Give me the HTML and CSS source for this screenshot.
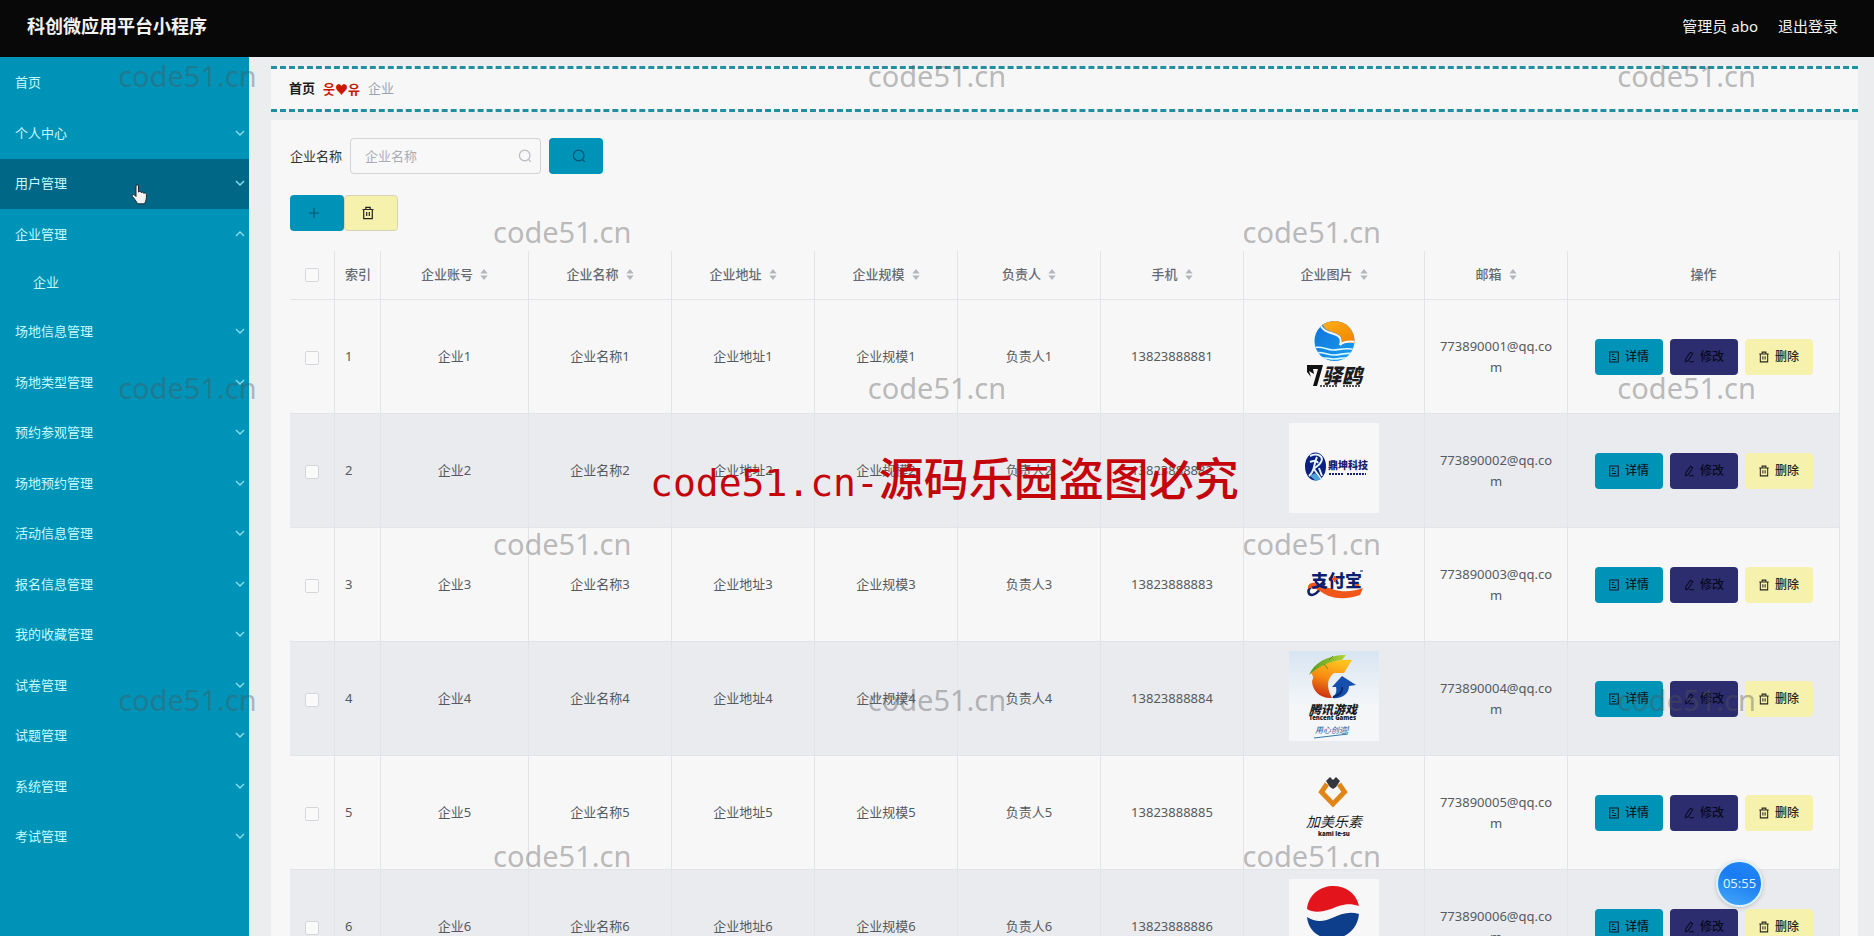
FILE: index.html
```html
<!DOCTYPE html>
<html lang="zh-CN">
<head>
<meta charset="utf-8">
<title>科创微应用平台小程序</title>
<link rel="stylesheet" href="styles.css">
</head>
<body>
<svg class="sprite" aria-hidden="true">
  <symbol id="i-down" viewBox="0 0 10 6"><path d="M1 1l4 4 4-4"/></symbol>
  <symbol id="i-up" viewBox="0 0 10 6"><path d="M1 5l4-4 4 4"/></symbol>
  <symbol id="i-search" viewBox="0 0 14 14"><circle cx="6.7" cy="6.5" r="5.3"/><path d="M10.5 10.5l2.3 2.3"/></symbol>
  <symbol id="i-plus" viewBox="0 0 14 14"><path d="M7 2v10M2 7h10"/></symbol>
  <symbol id="i-trash" viewBox="0 0 14 14"><path d="M1.5 3.5h11M4.8 3.2V1.3h4.4v1.9M2.7 3.5v9.2h8.6V3.5M5.7 6v4M8.3 6v4"/></symbol>
  <symbol id="i-doc" viewBox="0 0 14 14"><path d="M2 1.2h10v11.6H2zM4.5 4h3M4.5 6.5h2M7.5 7.5h2M4.5 10h5"/></symbol>
  <symbol id="i-edit" viewBox="0 0 14 14"><path d="M8.6 1.4l2.8 1.8-5.2 8-3.2 1.2.3-3.2zM7.3 12.6h5.5"/></symbol>
  <symbol id="i-sort" viewBox="0 0 8 12"><path d="M4 0l4 5H0zM4 12l4-5H0z"/></symbol>
</svg>

<header class="topbar">
  <h1 class="brand">科创微应用平台小程序</h1>
  <div class="user"><span>管理员 abo</span><a href="#">退出登录</a></div>
</header>

<div class="layout">
  <nav class="sidebar">
    <ul class="menu">
      <li><a href="#">首页</a></li>
      <li><a href="#">个人中心<svg class="chev"><use href="#i-down"/></svg></a></li>
      <li><a href="#" class="active">用户管理<svg class="chev"><use href="#i-down"/></svg></a></li>
      <li><a href="#">企业管理<svg class="chev"><use href="#i-up"/></svg></a>
        <a href="#" class="sub">企业</a></li>
      <li><a href="#">场地信息管理<svg class="chev"><use href="#i-down"/></svg></a></li>
      <li><a href="#">场地类型管理<svg class="chev"><use href="#i-down"/></svg></a></li>
      <li><a href="#">预约参观管理<svg class="chev"><use href="#i-down"/></svg></a></li>
      <li><a href="#">场地预约管理<svg class="chev"><use href="#i-down"/></svg></a></li>
      <li><a href="#">活动信息管理<svg class="chev"><use href="#i-down"/></svg></a></li>
      <li><a href="#">报名信息管理<svg class="chev"><use href="#i-down"/></svg></a></li>
      <li><a href="#">我的收藏管理<svg class="chev"><use href="#i-down"/></svg></a></li>
      <li><a href="#">试卷管理<svg class="chev"><use href="#i-down"/></svg></a></li>
      <li><a href="#">试题管理<svg class="chev"><use href="#i-down"/></svg></a></li>
      <li><a href="#">系统管理<svg class="chev"><use href="#i-down"/></svg></a></li>
      <li><a href="#">考试管理<svg class="chev"><use href="#i-down"/></svg></a></li>
    </ul>
  </nav>

  <main class="main">
    <div class="crumbs"><a href="#">首页</a><span class="sep">웃♥유</span><span class="here">企业</span></div>

    <section class="card">
      <form class="search">
        <label for="name">企业名称</label>
        <div class="field">
          <input id="name" type="text" placeholder="企业名称">
          <svg class="icon"><use href="#i-search"/></svg>
        </div>
        <button type="button" class="btn teal wide find" aria-label="查询"><svg class="icon"><use href="#i-search"/></svg></button>
      </form>
      <div class="tools">
        <button type="button" class="btn teal wide" aria-label="新增"><svg class="icon"><use href="#i-plus"/></svg></button>
        <button type="button" class="btn yellow wide edged" aria-label="批量删除"><svg class="icon"><use href="#i-trash"/></svg></button>
      </div>

      <table class="grid">
        <colgroup><col class="c-check"><col class="c-index"><col class="c-account"><col class="c-text"><col class="c-text"><col class="c-text"><col class="c-text"><col class="c-text"><col class="c-pic"><col class="c-text"><col></colgroup>
        <thead>
          <tr>
            <th><input type="checkbox" aria-label="全选"></th>
            <th class="left">索引</th>
            <th>企业账号<svg class="sort"><use href="#i-sort"/></svg></th>
            <th>企业名称<svg class="sort"><use href="#i-sort"/></svg></th>
            <th>企业地址<svg class="sort"><use href="#i-sort"/></svg></th>
            <th>企业规模<svg class="sort"><use href="#i-sort"/></svg></th>
            <th>负责人<svg class="sort"><use href="#i-sort"/></svg></th>
            <th>手机<svg class="sort"><use href="#i-sort"/></svg></th>
            <th>企业图片<svg class="sort"><use href="#i-sort"/></svg></th>
            <th>邮箱<svg class="sort"><use href="#i-sort"/></svg></th>
            <th>操作</th>
          </tr>
        </thead>
        <tbody>
          <tr>
            <td><input type="checkbox" aria-label="选择1"></td><td class="left">1</td><td>企业1</td><td>企业名称1</td><td>企业地址1</td><td>企业规模1</td><td>负责人1</td><td>13823888881</td>
            <td><svg class="logo" viewBox="0 0 90 90">
              <defs><linearGradient id="sun" x2="1" y2="1"><stop offset="0" stop-color="#ffb21a"/><stop offset="1" stop-color="#f08300"/></linearGradient>
              <linearGradient id="sea" x2="1" y2="1"><stop offset="0" stop-color="#1070dc"/><stop offset="1" stop-color="#1ba0ee"/></linearGradient>
              <clipPath id="disc"><circle cx="45.500" cy="32" r="20"/></clipPath></defs>
              <g clip-path="url(#disc)"><rect x="25" y="10" width="42" height="44" fill="url(#sea)"/>
              <path d="M31 10h36v24H53c1-5-2-8-7-10-7-2-12-4-15-14z" fill="url(#sun)"/>
              <path d="M30 12c2 9 8 11 15 13 6 2 8 5 6 11 3-3 9-4 16-3" fill="none" stroke="#f7f7f7" stroke-width="2"/>
              <path d="M24 39c8-3 13 2 20 2s13-3 23 0M25 44c8-2 13 2 20 2s13-3 20-1M29 49c7-1 11 1 16 1s10-2 15-1" fill="none" stroke="#d8fbff" stroke-width="1.600"/></g>
              <path d="M18 56h16l-6 21h-4l5-17h-5l1 5-5-3 2 6-4-5z" fill="#111"/>
              <text x="33" y="74" class="lt ink heavy italic" font-size="20">驿鸥</text>
              <path d="M31 77h17M54 77h18" stroke="#222" stroke-width="1.500" stroke-dasharray="2 1"/>
            </svg></td>
            <td class="mail">773890001@qq.com</td>
            <td><div class="ops"><button type="button" class="btn teal"><svg class="icon"><use href="#i-doc"/></svg>详情</button><button type="button" class="btn navy"><svg class="icon"><use href="#i-edit"/></svg>修改</button><button type="button" class="btn yellow"><svg class="icon"><use href="#i-trash"/></svg>删除</button></div></td>
          </tr>
          <tr>
            <td><input type="checkbox" aria-label="选择2"></td><td class="left">2</td><td>企业2</td><td>企业名称2</td><td>企业地址2</td><td>企业规模2</td><td>负责人2</td><td>13823888882</td>
            <td><svg class="logo" viewBox="0 0 90 90">
              <rect width="90" height="90" fill="#f7f7f7"/>
              <ellipse cx="26.500" cy="43.500" rx="10.500" ry="14" fill="#0a1f80"/>
              <path d="M21 33c8-4 14 1 11 6-2 4-6 5-7 7l7 10M28 34c-4 7-1 13-8 19M21 39c4-2 7-1 8 1M30 45l3 8" fill="none" stroke="#e6f5fc" stroke-width="2"/>
              <path d="M21 53l6 5 5-2-6-6z" fill="#4fa3d6"/>
              <text x="39" y="46" class="lt heavy" font-size="10" fill="#17206f">鼎坤科技</text>
              <path d="M40 51h15M58 51h19" stroke="#17206f" stroke-width="2" stroke-dasharray="2 1"/>
            </svg></td>
            <td class="mail">773890002@qq.com</td>
            <td><div class="ops"><button type="button" class="btn teal"><svg class="icon"><use href="#i-doc"/></svg>详情</button><button type="button" class="btn navy"><svg class="icon"><use href="#i-edit"/></svg>修改</button><button type="button" class="btn yellow"><svg class="icon"><use href="#i-trash"/></svg>删除</button></div></td>
          </tr>
          <tr>
            <td><input type="checkbox" aria-label="选择3"></td><td class="left">3</td><td>企业3</td><td>企业名称3</td><td>企业地址3</td><td>企业规模3</td><td>负责人3</td><td>13823888883</td>
            <td><svg class="logo" viewBox="0 0 90 90">
              <path d="M36 46c-4 5-8 12-13 12-4 0-5-5-1-8" fill="none" stroke="#0d1e70" stroke-width="2.500"/>
              <path d="M19 52c-1-7 7-8 14-4 12 6 24 9 41 3l-3 7c-18 6-31 3-40-4-5-3-10-4-12-2z" fill="#f0561a"/>
              <text x="22" y="50" class="lt heavy" font-size="17" fill="#0d1e70">支付宝</text>
              <path d="M46 39v6M43 42h6M66 48h4" stroke="#f0561a" stroke-width="2"/>
              <path d="M71 34h3" stroke="#0d1e70"/>
            </svg></td>
            <td class="mail">773890003@qq.com</td>
            <td><div class="ops"><button type="button" class="btn teal"><svg class="icon"><use href="#i-doc"/></svg>详情</button><button type="button" class="btn navy"><svg class="icon"><use href="#i-edit"/></svg>修改</button><button type="button" class="btn yellow"><svg class="icon"><use href="#i-trash"/></svg>删除</button></div></td>
          </tr>
          <tr>
            <td><input type="checkbox" aria-label="选择4"></td><td class="left">4</td><td>企业4</td><td>企业名称4</td><td>企业地址4</td><td>企业规模4</td><td>负责人4</td><td>13823888884</td>
            <td><svg class="logo" viewBox="0 0 90 90">
              <defs><linearGradient id="sky" x2="0" y2="1"><stop offset="0" stop-color="#d8e5f2"/><stop offset=".6" stop-color="#f4f6f8"/></linearGradient>
              <linearGradient id="fire" x1=".6" x2="0.300" y2="1"><stop offset="0" stop-color="#ffc320"/><stop offset=".5" stop-color="#f78a12"/><stop offset="1" stop-color="#c92b12"/></linearGradient>
              <linearGradient id="leaf" x2="1"><stop offset="0" stop-color="#4f9a22"/><stop offset="1" stop-color="#b4d436"/></linearGradient></defs>
              <rect width="90" height="90" fill="url(#sky)"/>
              <path d="M63 9l-8 13H45c-7 5-8 14-2 25-12 1-20-8-20-17 2-4 1-5-1-8 8-9 22-14 41-13z" fill="url(#fire)"/>
              <path d="M20 24C25 12 38 4 57 4l-4 5c-12 1-23 6-33 15z" fill="url(#leaf)"/>
              <path d="M35 13l4 5M40 9l4-4" stroke="#5d8d20"/>
              <path d="M53 25l14 9-7 1c0 8-7 13-17 12 4-3 5-7 4-11h-4z" fill="#174fae"/>
              <path d="M44 46c7-2 10-5 9-10" fill="none" stroke="#092b70" stroke-width="2"/>
              <text x="20" y="63" class="lt ink heavy italic" font-size="12">腾讯游戏</text>
              <text x="20" y="69" class="lt ink heavy" font-size="6">Tencent Games</text>
              <text x="26" y="82" class="lt italic" font-size="8" fill="#245d94">用心创造!</text>
              <path d="M25 87l34-4" stroke="#3a76aa"/>
            </svg></td>
            <td class="mail">773890004@qq.com</td>
            <td><div class="ops"><button type="button" class="btn teal"><svg class="icon"><use href="#i-doc"/></svg>详情</button><button type="button" class="btn navy"><svg class="icon"><use href="#i-edit"/></svg>修改</button><button type="button" class="btn yellow"><svg class="icon"><use href="#i-trash"/></svg>删除</button></div></td>
          </tr>
          <tr>
            <td><input type="checkbox" aria-label="选择5"></td><td class="left">5</td><td>企业5</td><td>企业名称5</td><td>企业地址5</td><td>企业规模5</td><td>负责人5</td><td>13823888885</td>
            <td><svg class="logo" viewBox="0 0 90 90">
              <path d="M38 19l-5.500 8L44 39l11.500-12L50 19" fill="none" stroke="#e08619" stroke-width="5"/>
              <path d="M37 16l4-4 3 3 3-3 4 4-4 6-3 2-3-2z" fill="#33363c"/>
              <text x="17" y="62" class="lt ink brush" font-size="14">加美乐素</text>
              <text x="29" y="71" class="lt ink heavy" font-size="6">kami le-su</text>
            </svg></td>
            <td class="mail">773890005@qq.com</td>
            <td><div class="ops"><button type="button" class="btn teal"><svg class="icon"><use href="#i-doc"/></svg>详情</button><button type="button" class="btn navy"><svg class="icon"><use href="#i-edit"/></svg>修改</button><button type="button" class="btn yellow"><svg class="icon"><use href="#i-trash"/></svg>删除</button></div></td>
          </tr>
          <tr>
            <td><input type="checkbox" aria-label="选择6"></td><td class="left">6</td><td>企业6</td><td>企业名称6</td><td>企业地址6</td><td>企业规模6</td><td>负责人6</td><td>13823888886</td>
            <td><svg class="logo" viewBox="0 0 90 90">
              <rect width="90" height="90" fill="#f7f7f7"/>
              <path d="M18 30C21 1 64-1 70 27c-12-4-20 0-28 3-9 3-18 4-24 0z" fill="#e3141b"/>
              <path d="M18 38c8 5 16 5 25 1 9-4 17-7 27-4-3 32-49 33-52 3z" fill="#0d3e8c"/>
            </svg></td>
            <td class="mail">773890006@qq.com</td>
            <td><div class="ops"><button type="button" class="btn teal"><svg class="icon"><use href="#i-doc"/></svg>详情</button><button type="button" class="btn navy"><svg class="icon"><use href="#i-edit"/></svg>修改</button><button type="button" class="btn yellow"><svg class="icon"><use href="#i-trash"/></svg>删除</button></div></td>
          </tr>
        </tbody>
      </table>
    </section>
  </main>
</div>

<div class="timer">05:55</div>

<svg class="pointer" viewBox="0 0 18 22"><path d="M5 2c0-1.500 2.500-1.500 2.500 0v6c1-1 2.500-.6 2.700.5 1-.7 2.300-.3 2.500.8 1.200-.6 2.800 0 2.800 1.500 0 4-.5 6-2 9H6.500C5 16.500 3 14.500 1.500 12.500c-.8-1.500 1-2.500 2-1.500L5 12.500z"/></svg>

<div class="marks" aria-hidden="true">
  <span>code51.cn</span><span></span><span>code51.cn</span><span></span><span>code51.cn</span>
  <span></span><span>code51.cn</span><span></span><span>code51.cn</span><span></span>
  <span>code51.cn</span><span></span><span>code51.cn</span><span></span><span>code51.cn</span>
  <span></span><span>code51.cn</span><span></span><span>code51.cn</span><span></span>
  <span>code51.cn</span><span></span><span>code51.cn</span><span></span><span>code51.cn</span>
  <span></span><span>code51.cn</span><span></span><span>code51.cn</span><span></span>
</div>
<div class="notice"><span class="latin">code51.cn-</span>源码乐园盗图必究</div>
</body>
</html>
```

FILE: styles.css
```css
* { box-sizing: border-box; }

body {
  margin: 0;
  height: 100vh;
  overflow: hidden;
  position: relative;
  display: flex;
  flex-direction: column;
  background: #ebedef;
  color: #555a60;
  font: 13px/21px "Noto Sans", "Noto Sans CJK SC", sans-serif;
}

a { color: inherit; text-decoration: none; }
button, input { font: inherit; color: inherit; }
.sprite { display: none; }

.topbar {
  flex: none;
  height: 57px;
  padding: 0 36px 4px 27px;
  display: flex;
  align-items: center;
  justify-content: space-between;
  background: #080808;
  color: #f2f2f2;
}
.brand { margin: 0; font-size: 18px; font-weight: 700; }
.user { display: flex; gap: 20px; font-size: 15px; padding-bottom: 1px; }

.layout { flex: 1; min-height: 0; display: flex; }

.sidebar { flex: none; width: 249px; background: #0093b8; color: #c4fbff; }
.menu { list-style: none; margin: 0; padding: 1px 0 0; }
.menu li { padding-bottom: 1px; }
.menu li:nth-child(even) { padding-bottom: 0; }
.menu a {
  height: 50px;
  padding: 0 4px 2px 15px;
  display: flex;
  align-items: center;
  justify-content: space-between;
}
.menu .active { background: #006787; }
.menu .sub { height: 47px; padding-left: 33px; }
.chev { width: 10px; height: 6px; fill: none; stroke: #84dcea; stroke-width: 1.5; }

.main {
  flex: 1;
  min-width: 0;
  padding: 9px 16px 0 22px;
  display: flex;
  flex-direction: column;
  gap: 8px;
}
.crumbs {
  flex: none;
  height: 46px;
  padding: 0 18px 2px;
  display: flex;
  align-items: center;
  gap: 8px;
  background: #f7f7f7;
  border: dashed #218fa0;
  border-width: 3px 0;
}
.crumbs a { color: #1c1c1c; font-weight: 700; }
.sep { color: #cb1600; font-family: "Noto Sans CJK KR", "DejaVu Sans", sans-serif; font-weight: 700; }
.here { color: #9aa4b2; }

.card { flex: none; padding: 18px 18px 18px 19px; background: #f7f7f7; }

.search { display: flex; align-items: center; gap: 8px; color: #333; }
.field { position: relative; width: 191px; }
.field input {
  display: block;
  width: 100%;
  height: 36px;
  padding: 0 30px 0 14px;
  border: 1px solid #d0d3d8;
  border-radius: 4px;
  background: #f8f8f8;
}
.field input::placeholder { color: #a9adb5; opacity: 1; }
.field .icon { position: absolute; right: 9px; top: 11px; width: 14px; height: 14px; stroke: #b9bcc2; }

.tools { display: flex; margin: 21px 0 20px; }
.icon { width: 12px; height: 12px; fill: none; stroke: currentColor; stroke-width: 1.2; }

.btn {
  display: flex;
  align-items: center;
  justify-content: center;
  gap: 5px;
  width: 68px;
  height: 36px;
  padding: 0;
  border: 0;
  border-radius: 4px;
  font-size: 12px;
  font-weight: 500;
  color: #0d1a26;
}
.wide { width: 54px; }
.wide .icon { width: 14px; height: 14px; }
.find { padding-left: 6px; }
.tools .btn { padding-right: 6px; }
.teal { background: #0093b8; }
.teal.wide { color: #075470; }
.navy { background: #2c2d6e; color: #080a20; }
.yellow { background: #f6f1ac; color: #26261c; }
.edged { border: 1px solid #d6d4b4; }

.grid { width: 100%; table-layout: fixed; border-collapse: separate; border-spacing: 0; }
.c-check { width: 45px; }
.c-index { width: 46px; }
.c-account { width: 148px; }
.c-text { width: 143px; }
.c-pic { width: 181px; }
.grid th, .grid td {
  padding: 0 10px;
  text-align: center;
  vertical-align: middle;
  border-right: 1px solid #e2e4ea;
  border-bottom: 1px solid #e2e4ea;
}
.grid th { height: 49px; padding-bottom: 2px; font-weight: 500; color: #666a70; white-space: nowrap; }
.grid td { height: 114px; }
.grid .left { text-align: left; }
.grid tbody tr:nth-child(even) { background: #e9ebef; }
.grid .mail { word-break: break-all; }
.grid input {
  appearance: none;
  display: block;
  width: 14px;
  height: 14px;
  margin: 2px auto 0;
  border: 1px solid #d4d7dc;
  border-radius: 2px;
  background: #fafafa;
}
.sort { width: 8px; height: 11px; margin-left: 7px; vertical-align: -1px; fill: #b2b6bd; }
.logo { display: block; width: 90px; height: 90px; margin: 0 auto 5px; }
.lt { font-family: "Noto Sans", "Noto Sans CJK SC", sans-serif; }
.ink { fill: #1c1c1f; }
.heavy { font-weight: 900; }
.italic { font-style: italic; }
.brush { font-family: "Liberation Serif", "Noto Sans CJK SC", serif; font-style: italic; }
.ops { display: flex; justify-content: center; gap: 7px; }

.timer {
  position: absolute;
  right: 111px;
  bottom: 29px;
  width: 47px;
  height: 47px;
  display: flex;
  align-items: center;
  justify-content: center;
  border: 2px solid #dcf1fd;
  border-radius: 50%;
  background: linear-gradient(20deg, #46aaf8, #1a7cf2 60%, #2288f6);
  box-shadow: 0 1px 4px #0003;
  color: #dcf4ff;
}

.pointer { position: absolute; left: 131px; top: 184px; width: 18px; height: 22px; fill: #f2f2f2; stroke: #222c33; }

.marks {
  position: absolute;
  inset: 0;
  display: grid;
  grid-template-columns: repeat(5, 1fr);
  grid-template-rows: repeat(6, 1fr);
  place-items: center;
  pointer-events: none;
  color: #5556;
  font-size: 29px;
  line-height: 40px;
}
.marks span { padding-bottom: 4px; }

.notice {
  position: absolute;
  left: 650px;
  top: 447px;
  color: #c4060c;
  font: 500 45px/60px "Noto Sans CJK SC", sans-serif;
  white-space: nowrap;
  pointer-events: none;
}
.notice .latin { font-family: "DejaVu Sans Mono", monospace; font-size: 38px; }
```
